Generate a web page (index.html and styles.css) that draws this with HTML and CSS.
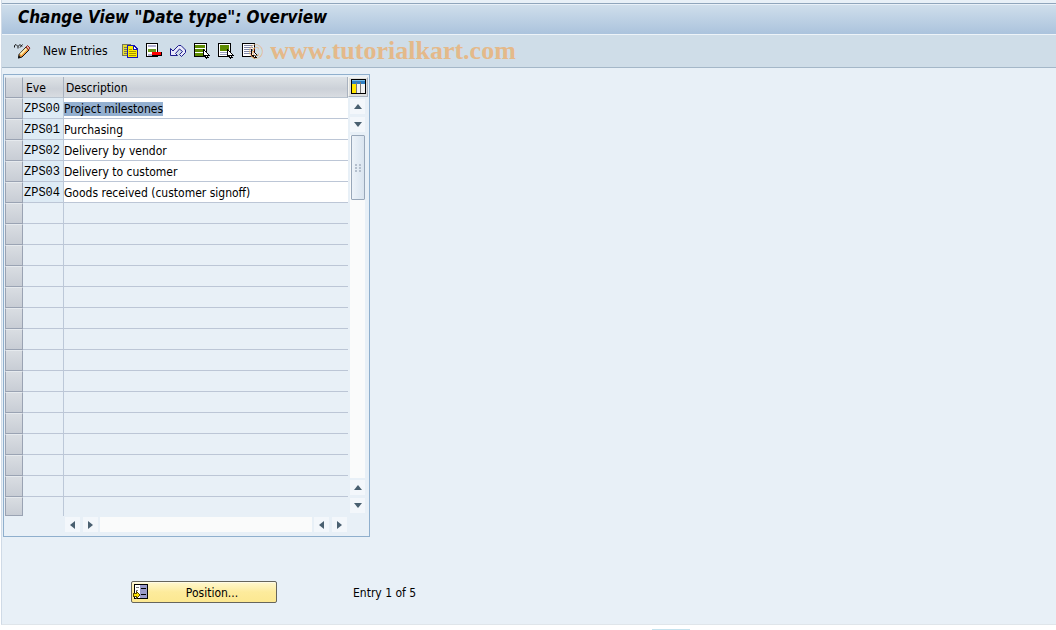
FILE: index.html
```html
<!DOCTYPE html>
<html lang="en">
<head>
  <meta charset="UTF-8">
  <meta name="viewport" content="width=device-width, initial-scale=1.0">
  <title>Change View "Date type": Overview</title>
  <link rel="stylesheet" href="styles.css">
</head>
<body>

  <div class="window">
    <header class="title-bar">
      <h1>Change View "Date type": Overview</h1>
    </header>

    <!-- Application toolbar -->
    <nav class="toolbar">
      <button class="tool tool-edit" type="button" aria-label="Display / Change">
        <svg width="18" height="16" viewBox="0 0 18 16">
          <path d="M1.500 4.500V2.500L3 1.500L5 3.500V5.500M5 3.500L7 1.500L9 3.500M7 4.500L9.500 1.500" fill="none" stroke="#111"/>
          <path d="M6 11.500L13 4L16 7L9 14L5.500 15z" fill="#f09a38" stroke="#111"/>
          <path d="M7.500 11.500L13.500 5.500" stroke="#ffeeb0" stroke-width="2"/>
          <path d="M13 4L14.500 2.500L17 5L15.500 7z" fill="#f0a8a0" stroke="#8a2a20"/>
          <path d="M5 15.500l1-3 2 2z" fill="#111"/>
        </svg>
      </button>
      <button class="tool tool-text" type="button">New Entries</button>
      <button class="tool" type="button" aria-label="Copy As">
        <svg width="16" height="16" viewBox="0 0 16 16" shape-rendering="crispEdges">
          <path d="M.5 1.500H8.500V12.500H.5z" fill="#e8dc30" stroke="#77775a"/>
          <path d="M2 4.500H5M2 6.500H5M2 8.500H5M2 10.500H5" stroke="#77775a"/>
          <path d="M5.500 2.500H12L15.500 6V14.500H5.500z" fill="#fff000" stroke="#1818b4"/>
          <path d="M11.500 2.500V6.500H15.500z" fill="#fff" stroke="#1818b4"/>
          <path d="M7 6.500H10M7 8.500H14M7 10.500H14M7 12.500H14" stroke="#a89400"/>
        </svg>
      </button>
      <button class="tool" type="button" aria-label="Delete">
        <svg width="16" height="16" viewBox="0 0 16 16" shape-rendering="crispEdges">
          <path d="M.5 .5H11.500V13.500H.5z" fill="#fff" stroke="#000"/>
          <path d="M2 2H10V4H2zM2 11H6V13H2z" fill="#b0b0d0"/>
          <path d="M2 6H10V9H2z" fill="#6a9a20"/>
          <path d="M6 9H16V13H6z" fill="#000"/>
          <path d="M6 9H15V12H6z" fill="#f00"/>
        </svg>
      </button>
      <button class="tool" type="button" aria-label="Undo Change">
        <svg width="16" height="16" viewBox="0 0 16 16">
          <path d="M.5 5.500V12.500H7.500L5.500 10.500L9.500 6L12.500 8.500L9.500 11.500L11.500 13.500L15.500 9.500V7L11 2.500H8.500L3 8z" fill="#e8e8fa" stroke="#1c1c8c"/>
        </svg>
      </button>
      <button class="tool" type="button" aria-label="Select All">
        <svg width="16" height="16" viewBox="0 0 16 16" shape-rendering="crispEdges">
          <path d="M.5 .5H12.500V13.500H.5z" fill="#fff" stroke="#000"/>
          <path d="M1 2H11V5H1zM1 6H11V9H1zM1 10H11V13H1z" fill="#5c8a00"/>
          <path d="M9.500 6.500V13.500L11 12.500L12.500 15.500L14 14.500L13 12.500H15.500z" fill="#fff" stroke="#000"/>
        </svg>
      </button>
      <button class="tool" type="button" aria-label="Select Block">
        <svg width="16" height="16" viewBox="0 0 16 16" shape-rendering="crispEdges">
          <path d="M.5 .5H12.500V13.500H.5z" fill="#fff" stroke="#000"/>
          <path d="M2 2H11V8H2z" fill="#5c8a00"/>
          <path d="M2 9H9V10H2zM2 11H9V12H2z" fill="#9aa0c0"/>
          <path d="M9.500 6.500V13.500L11 12.500L12.500 15.500L14 14.500L13 12.500H15.500z" fill="#fff" stroke="#000"/>
        </svg>
      </button>
      <button class="tool" type="button" aria-label="Deselect All">
        <svg width="16" height="16" viewBox="0 0 16 16" shape-rendering="crispEdges">
          <path d="M.5 .5H12.500V13.500H.5z" fill="#fff" stroke="#000"/>
          <path d="M2 2.500H11M2 4.500H11M2 6.500H11M2 8.500H9M2 10.500H9" stroke="#8088a8"/>
          <path d="M9.500 6.500V13.500L11 12.500L12.500 15.500L14 14.500L13 12.500H15.500z" fill="#fff" stroke="#000"/>
        </svg>
      </button>
      <span class="watermark"><span class="copyright">©</span> www.tutorialkart.com</span>
    </nav>

    <main class="content">
      <section class="table-control">
        <div class="table-area">
          <table class="entries">
            <colgroup>
              <col class="col-select">
              <col class="col-key">
              <col>
            </colgroup>
            <thead>
              <tr><th class="select"></th><th>Eve</th><th>Description</th></tr>
            </thead>
            <tbody>
              <tr class="filled"><td class="select"></td><td class="key">ZPS00</td><td><mark>Project milestones</mark></td></tr>
              <tr class="filled"><td class="select"></td><td class="key">ZPS01</td><td>Purchasing</td></tr>
              <tr class="filled"><td class="select"></td><td class="key">ZPS02</td><td>Delivery by vendor</td></tr>
              <tr class="filled"><td class="select"></td><td class="key">ZPS03</td><td>Delivery to customer</td></tr>
              <tr class="filled"><td class="select"></td><td class="key">ZPS04</td><td>Goods received (customer signoff)</td></tr>
              <tr><td class="select"></td><td></td><td></td></tr>
              <tr><td class="select"></td><td></td><td></td></tr>
              <tr><td class="select"></td><td></td><td></td></tr>
              <tr><td class="select"></td><td></td><td></td></tr>
              <tr><td class="select"></td><td></td><td></td></tr>
              <tr><td class="select"></td><td></td><td></td></tr>
              <tr><td class="select"></td><td></td><td></td></tr>
              <tr><td class="select"></td><td></td><td></td></tr>
              <tr><td class="select"></td><td></td><td></td></tr>
              <tr><td class="select"></td><td></td><td></td></tr>
              <tr><td class="select"></td><td></td><td></td></tr>
              <tr><td class="select"></td><td></td><td></td></tr>
              <tr><td class="select"></td><td></td><td></td></tr>
              <tr><td class="select"></td><td></td><td></td></tr>
              <tr><td class="select"></td><td></td><td></td></tr>
            </tbody>
          </table>

          <!-- Horizontal scroll bar -->
          <div class="scroll-x">
            <button class="arrow" type="button" aria-label="First column"><svg width="5" height="8" viewBox="0 0 5 8"><path d="M5 0V8L0 4z"/></svg></button>
            <button class="arrow" type="button" aria-label="Scroll right"><svg width="5" height="8" viewBox="0 0 5 8"><path d="M0 0V8L5 4z"/></svg></button>
            <div class="track"></div>
            <button class="arrow" type="button" aria-label="Scroll left"><svg width="5" height="8" viewBox="0 0 5 8"><path d="M5 0V8L0 4z"/></svg></button>
            <button class="arrow" type="button" aria-label="Last column"><svg width="5" height="8" viewBox="0 0 5 8"><path d="M0 0V8L5 4z"/></svg></button>
          </div>
        </div>

        <div class="side">
          <button class="config" type="button" aria-label="Table settings">
            <svg width="15" height="15" viewBox="0 0 15 15" shape-rendering="crispEdges">
              <path d="M0 0H15V15H0z" fill="#000"/>
              <path d="M1 1H14V5H1z" fill="#2f7fc4"/>
              <path d="M1 1H14V2H1z" fill="#7cc0ea"/>
              <path d="M1 5H5V14H1z" fill="#ffe600"/>
              <path d="M6 5H9V14H6zM10 5H14V14H10z" fill="#f2f2f2"/>
              <path d="M5.500 3V14M9.500 3V14" stroke="#777"/>
            </svg>
          </button>
          <!-- Vertical scroll bar -->
          <div class="scroll-y">
            <button class="arrow" type="button" aria-label="First page"><svg width="8" height="5" viewBox="0 0 8 5"><path d="M0 5H8L4 0z"/></svg></button>
            <button class="arrow" type="button" aria-label="Scroll down"><svg width="8" height="5" viewBox="0 0 8 5"><path d="M0 0H8L4 5z"/></svg></button>
            <div class="track">
              <div class="thumb">
                <svg width="6" height="8" viewBox="0 0 6 8" shape-rendering="crispEdges"><path d="M0 0H2V2H0zM4 0H6V2H4zM0 3H2V5H0zM4 3H6V5H4zM0 6H2V8H0zM4 6H6V8H4z" fill="#b4bfcd"/></svg>
              </div>
            </div>
            <button class="arrow" type="button" aria-label="Scroll up"><svg width="8" height="5" viewBox="0 0 8 5"><path d="M0 5H8L4 0z"/></svg></button>
            <button class="arrow" type="button" aria-label="Last page"><svg width="8" height="5" viewBox="0 0 8 5"><path d="M0 0H8L4 5z"/></svg></button>
          </div>
        </div>
      </section>

      <div class="actions">
        <button class="position-btn" type="button">
          <svg width="16" height="16" viewBox="0 0 16 16" shape-rendering="crispEdges">
            <path d="M1.500 .5H14.500V14.500H1.500z" fill="#fff" stroke="#000"/>
            <path d="M7 1H14V14H7z" fill="#9a9ac8"/>
            <path d="M8 4.500H13M8 10.500H13" stroke="#000"/>
            <path d="M3 3.500H6M3 6.500H5" stroke="#777"/>
            <path d="M.5 9.500H3.500V7.500L7 11L3.500 14.500V12.500H.5z" fill="#ffe600" stroke="#5a4a00"/>
          </svg>
          <span>Position...</span>
        </button>
        <span class="entry-count">Entry 1 of 5</span>
      </div>
    </main>
  </div>

  <footer class="status"><div class="handle"></div></footer>

</body>
</html>
```

FILE: styles.css
```css
/* Global Styles */
* {
  box-sizing: border-box;
}

body {
  margin: 0;
  min-height: 100vh;
  display: flex;
  flex-direction: column;
  background-color: #fff;
  color: #000;
  font-family: "DejaVu Sans Condensed", "DejaVu Sans", sans-serif;
  font-size: 12px;
  line-height: 16px;
}

button {
  margin: 0;
  padding: 0;
  border: 0;
  background: none;
  color: inherit;
  font: inherit;
}

svg {
  display: block;
}

.window {
  flex: 1;
  display: flex;
  flex-direction: column;
  margin-left: 1px;
  padding-top: 3px;
  border-left: 1px solid #cfdae6;
  border-bottom: 1px solid #dfe5ea;
  background-color: #e8f0f7;
}

/* Title */
.title-bar {
  height: 31px;
  padding: 2px 16px 0;
  border-top: 1px solid #8fa5bb;
  background: linear-gradient(#d0dfec, #abc3dd);
  box-shadow: inset 0 1px #e8f0f8;
}

.title-bar h1 {
  margin: 0;
  font-size: 17px;
  line-height: 22px;
  font-weight: bold;
  font-style: italic;
}

/* Toolbar */
.toolbar {
  display: flex;
  align-items: center;
  gap: 8px;
  height: 34px;
  padding-left: 11px;
  border-top: 1px solid #edf3f8;
  border-bottom: 1px solid #a4b7c8;
  background-color: #cfdde8;
}

.tool-edit {
  margin-right: 4px;
}

.tool-text {
  margin-right: 6px;
}

.watermark {
  margin-left: -17px;
  color: #e4b98a;
  font-family: "Liberation Serif", serif;
  font-size: 26px;
  font-weight: bold;
  line-height: 30px;
}

.copyright {
  font-size: 20px;
  font-weight: normal;
}

/* Table */
.content {
  padding: 6px 1px 0;
}

.table-control {
  display: flex;
  width: 367px;
  padding: 2px 1px;
  border: 1px solid #8fafcd;
}

.table-area {
  flex: 1;
}

.entries {
  width: 100%;
  table-layout: fixed;
  border-collapse: separate;
  border-spacing: 0;
}

.col-select {
  width: 18px;
}

.col-key {
  width: 41px;
}

.entries th {
  height: 21px;
  padding: 2px 2px 0 3px;
  border-right: 1px solid #a9b2bf;
  border-bottom: 1px solid #b9c4d0;
  background: linear-gradient(#dee2e6, #ccd1d8 60%, #d8dce1);
  font-weight: normal;
  text-align: left;
}

.entries th:last-child {
  padding-left: 2px;
}

.entries td {
  height: 21px;
  padding: 2px 1px 0;
  border-right: 1px solid #bcc8d8;
  border-bottom: 1px solid #bcc6d6;
  white-space: nowrap;
}

.entries td:last-child {
  padding: 2px 0 0;
  border-right: 0;
}

.entries .filled td {
  background-color: #fff;
}

.entries .filled .key {
  background-color: #deebf5;
  font-family: "Liberation Mono", monospace;
}

.entries .select,
.entries .filled .select {
  border: 1px solid #9aa3b3;
  border-top-color: #e6eaee;
  background: linear-gradient(#d9dde2, #c8cdd5);
}

.entries tr:last-child td {
  height: 19px;
  border-bottom: 0;
}

.entries tr:last-child .select {
  border-bottom: 1px solid #9aa3b3;
}

mark {
  background-color: #94b0d0;
  color: #000;
}

/* Scroll bars */
.arrow {
  display: flex;
  align-items: center;
  justify-content: center;
  width: 15px;
  height: 15px;
  background-color: #f3f7fb;
  fill: #4a6070;
}

.track {
  flex: 1;
  background-color: #fafbfb;
}

.scroll-x {
  display: flex;
  gap: 3px;
  padding: 1px 1px 2px 60px;
}

.scroll-x .track {
  margin: 0 -1px;
}

.side {
  display: flex;
  flex-direction: column;
  width: 20px;
}

.config {
  display: flex;
  justify-content: center;
  height: 20px;
  padding-top: 1px;
  border: 1px solid #a9b2bf;
  border-top-color: #f4f4f0;
  border-left-color: #f4f4f0;
  background-color: #dcdedd;
}

.scroll-y {
  flex: 1;
  display: flex;
  flex-direction: column;
  gap: 3px;
  padding: 2px 2px 21px;
}

.scroll-y .track {
  width: 15px;
  margin-bottom: -1px;
}

.thumb {
  display: flex;
  align-items: center;
  justify-content: center;
  height: 65px;
  margin: 0 0 0 1px;
  border: 1px solid #98a7b9;
  border-radius: 1px;
  background: linear-gradient(to right, #edf3f9, #d9e4ef);
}

/* Actions */
.actions {
  display: flex;
  align-items: center;
  gap: 76px;
  padding: 44px 0 0 128px;
}

.position-btn {
  display: flex;
  align-items: center;
  width: 146px;
  height: 22px;
  padding: 0 1px;
  border: 1px solid #66655c;
  border-radius: 2px;
  background: linear-gradient(#fff8d0, #fdeb9c 50%, #fce891);
  box-shadow: inset 0 1px #fffbe6;
}

.position-btn span {
  flex: 1;
  padding-top: 2px;
}

.entry-count {
  padding-top: 2px;
}

/* Status */
.status {
  display: flex;
  flex-direction: column;
  justify-content: flex-end;
  align-items: center;
  height: 5px;
  padding-left: 27%;
}

.handle {
  width: 38px;
  height: 1px;
  background-color: #c4e2ee;
}
```
